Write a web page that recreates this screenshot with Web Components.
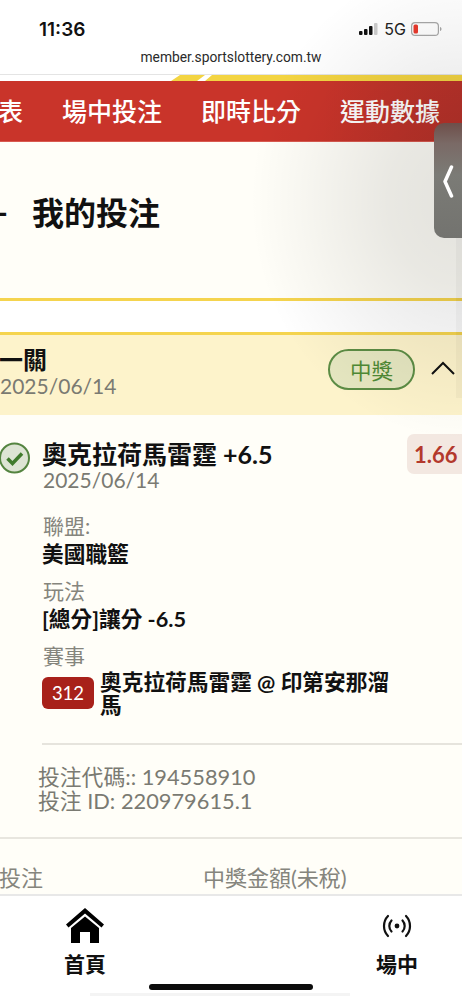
<!DOCTYPE html>
<html lang="zh-Hant">
<head>
<meta charset="utf-8">
<title>我的投注</title>
<style>
  html, body { margin: 0; padding: 0; }
  body {
    width: 462px;
    height: 1000px;
    overflow: hidden;
    position: relative;
    display: flex;
    flex-direction: column;
    background: #fffef8;
    font-family: Lato, "Noto Sans CJK TC", sans-serif;
  }
</style>
</head>
<body>
  <status-bar time="11:36" url="member.sportslottery.com.tw"></status-bar>
  <main-nav>
    <span>表</span><span>場中投注</span><span>即時比分</span><span>運動數據</span>
  </main-nav>
  <page-title>我的投注</page-title>
  <bet-card name="一關" date="2025/06/14" status="中獎">
    <bet-leg name="奧克拉荷馬雷霆 +6.5" date="2025/06/14" odds="1.66" league="美國職籃" play="[總分]讓分 -6.5" code="312" game="奧克拉荷馬雷霆 @ 印第安那溜馬"></bet-leg>
    <bet-ids>
      <div>投注代碼:: 194558910</div>
      <div>投注 ID: 220979615.1</div>
    </bet-ids>
    <bet-sums></bet-sums>
  </bet-card>
  <tab-bar></tab-bar>
  <side-tab></side-tab>

<script>
const cjk = 'Lato, "Noto Sans CJK TC", sans-serif';

class StatusBar extends HTMLElement {
  connectedCallback() {
    this.attachShadow({ mode: 'open' });
    this.shadowRoot.innerHTML = `
      <style>
        :host { display: block; height: 75px; box-sizing: border-box; background: #fff; border-bottom: 1px solid #e4e4e4; flex: none; }
        .top { display: flex; align-items: center; justify-content: space-between; height: 24px; padding: 17px 20px 0 39px; }
        .time { font: 600 19px Inter, "Liberation Sans", sans-serif; color: #111; }
        .right { display: flex; align-items: center; gap: 5px; font: 400 16px Inter, "Liberation Sans", sans-serif; color: #222; }
        .url { margin-top: 8px; text-align: center; font: 400 13.8px Roboto, "Liberation Sans", sans-serif; color: #2a2a2a; }
      </style>
      <div class="top">
        <span class="time">${this.getAttribute('time')}</span>
        <span class="right">
          <svg width="20" height="14" viewBox="0 0 20 14"><rect x="0" y="9" width="3.5" height="4" rx="1" fill="#111"/><rect x="5" y="7" width="3.5" height="6" rx="1" fill="#111"/><rect x="10" y="4" width="3.5" height="9" rx="1" fill="#111"/><rect x="15" y="1" width="3.5" height="12" rx="1" fill="#ccc"/></svg>
          <span>5G</span>
          <svg width="31" height="14" viewBox="0 0 31 14"><rect x=".6" y=".6" width="26.8" height="12.8" rx="3.5" fill="none" stroke="#a8a8a8" stroke-width="1.2"/><rect x="2.5" y="2.5" width="4.5" height="9" rx="1.5" fill="#e8392c"/><path d="M29 5v4c1-.3 1.5-1 1.5-2s-.5-1.7-1.5-2z" fill="#a8a8a8"/></svg>
        </span>
      </div>
      <div class="url">${this.getAttribute('url')}</div>`;
  }
}

class MainNav extends HTMLElement {
  connectedCallback() {
    this.attachShadow({ mode: 'open' });
    this.shadowRoot.innerHTML = `
      <style>
        :host { display: block; flex: none; overflow: hidden; }
        svg { display: block; }
        .bar { height: 61px; box-sizing: border-box; display: flex; align-items: center; gap: 39px; margin-left: -2px; padding-bottom: 2px; white-space: nowrap;
          background: linear-gradient(90deg, #c9342a 0, #c9342a 70%, #b8322a 100%); border-bottom: 1px solid #d95a50;
          font: 500 25px ${cjk}; color: #fff; }
      </style>
      <svg width="462" height="6" viewBox="0 0 462 6"><rect width="462" height="6" fill="#fff"/><path d="M171 6 180 0H205L197 6ZM205 6 212 0H462V6Z" fill="#f3d442"/></svg>
      <div class="bar"><slot></slot></div>`;
  }
}

class PageTitle extends HTMLElement {
  connectedCallback() {
    this.attachShadow({ mode: 'open' });
    this.shadowRoot.innerHTML = `
      <style>
        :host { display: block; flex: none; height: 159px; box-sizing: border-box; border-bottom: 3px solid #f5d44e; overflow: hidden; }
        .row { display: flex; align-items: center; height: 40px; padding-top: 49px; margin-left: -4px; font: 700 32px ${cjk}; color: #111; }
        .dash { width: 36px; }
      </style>
      <div class="row"><span class="dash">-</span><span><slot></slot></span></div>`;
  }
}

class BetCard extends HTMLElement {
  connectedCallback() {
    this.attachShadow({ mode: 'open' });
    this.shadowRoot.innerHTML = `
      <style>
        :host { display: block; flex: 1; min-height: 0; overflow: hidden; background: #fffef8; }
        .spacer { height: 34px; box-sizing: border-box; background: #fff; border-bottom: 3px solid #f5d44e; }
        header { height: 80px; box-sizing: border-box; background: #fdf3cb; display: flex; align-items: center; justify-content: space-between; padding: 0 7px 0 0; }
        .who { margin-top: -6px; }
        .name { font: 700 24px/28px ${cjk}; color: #111; margin-left: -1px; }
        .date { font: 400 21px/24px Lato, sans-serif; color: #7a7a72; }
        .side { display: flex; align-items: center; gap: 16px; margin-top: -12px; }
        .pill { width: 87px; height: 41px; box-sizing: border-box; border: 2px solid #5c8c44; border-radius: 21px; background: #e5e6c0;
          display: flex; align-items: center; justify-content: center; font: 400 21.5px ${cjk}; color: #4f8a35; }
        svg { display: block; margin-top: -3px; }
      </style>
      <div class="spacer"></div>
      <header>
        <div class="who">
          <div class="name">${this.getAttribute('name')}</div>
          <div class="date">${this.getAttribute('date')}</div>
        </div>
        <div class="side">
          <span class="pill">${this.getAttribute('status')}</span>
          <svg width="24" height="14" viewBox="0 0 24 14"><path d="M1 13 12 2 23 13" fill="none" stroke="#111" stroke-width="2"/></svg>
        </div>
      </header>
      <slot></slot>`;
  }
}

class BetLeg extends HTMLElement {
  connectedCallback() {
    const a = n => this.getAttribute(n);
    this.attachShadow({ mode: 'open' });
    this.shadowRoot.innerHTML = `
      <style>
        :host { display: block; position: relative; padding: 24px 0 0 43px; height: 328px; box-sizing: border-box; }
        .check { position: absolute; left: -1px; top: 27px; }
        .odds { position: absolute; right: 0; top: 19px; width: 55px; height: 40px; box-sizing: border-box; padding-left: 7px; border-radius: 7px 0 0 7px; background: #f3e8e1;
          display: flex; align-items: center; font: 700 22px Lato, sans-serif; color: #b3392c; }
        .name { font: 700 25px/30px ${cjk}; color: #111; margin-left: -1px; }
        .date { font: 400 21px/22px Lato, sans-serif; color: #7a7a72; margin-bottom: 23px; }
        .label { font: 400 21px/27px ${cjk}; color: #85857d; margin: -2px 0 2px; }
        .val { font: 700 21.7px/27px ${cjk}; color: #111; margin: 0 0 11px -1px; }
        .game { display: flex; gap: 6px; margin: 0 0 0 -1px; }
        .code { flex: none; width: 52px; height: 32px; margin-top: 6px; border-radius: 6px; background: #a8211a; color: #fff; display: flex; align-items: center; justify-content: center; font: 400 18.5px Lato, sans-serif; }
        .title { width: 292px; font: 700 21.7px/23px ${cjk}; color: #111; }
      </style>
      <svg class="check" width="31" height="32" viewBox="0 0 31 32"><circle cx="15.5" cy="16" r="14.5" fill="#dde4d4" stroke="#548440" stroke-width="2"/><path d="M8.5 16.5 13.5 21.5 23 11.5" fill="none" stroke="#3f7a2c" stroke-width="3.5"/></svg>
      <div class="odds">${a('odds')}</div>
      <div class="name">${a('name')}</div>
      <div class="date">${a('date')}</div>
      <div class="label">聯盟:</div>
      <div class="val">${a('league')}</div>
      <div class="label">玩法</div>
      <div class="val">${a('play')}</div>
      <div class="label">賽事</div>
      <div class="game"><span class="code">${a('code')}</span><span class="title">${a('game')}</span></div>`;
  }
}

class BetIds extends HTMLElement {
  connectedCallback() {
    this.attachShadow({ mode: 'open' });
    this.shadowRoot.innerHTML = `
      <style>
        :host { display: block; height: 96px; box-sizing: border-box; margin-left: 42px; border-top: 2px solid #e6e4dd; position: relative; }
        .in { margin-left: -4px; padding-top: 20px; font: 400 21.8px/24px ${cjk}; color: #7a7a72; }
        .rule { position: absolute; left: -42px; right: 0; bottom: 0; height: 2px; background: #e8e6df; }
      </style>
      <div class="in"><slot></slot></div>
      <div class="rule"></div>`;
  }
}

class BetSums extends HTMLElement {
  connectedCallback() {
    this.attachShadow({ mode: 'open' });
    this.shadowRoot.innerHTML = `
      <style>
        :host { display: flex; padding-top: 24px; margin-left: -1px; font: 400 22px/30px ${cjk}; color: #85857d; }
        .a { width: 204px; }
      </style>
      <span class="a">投注</span><span>中獎金額(未稅)</span>`;
  }
}

class TabBar extends HTMLElement {
  connectedCallback() {
    this.attachShadow({ mode: 'open' });
    this.shadowRoot.innerHTML = `
      <style>
        :host { display: block; flex: none; height: 106px; box-sizing: border-box; background: #fff; border-top: 2px solid #e8e8e8; position: relative; }
        .tabs { display: flex; justify-content: space-between; padding: 0 43px 0 63px; }
        .tab { width: 44px; display: flex; flex-direction: column; align-items: center; font: 700 21px/26px ${cjk}; color: #111; }
        .ico { height: 47px; display: flex; align-items: flex-end; justify-content: center; margin-bottom: 8px; }
        .home { position: absolute; left: 149px; top: 88px; width: 164px; height: 6px; border-radius: 3px; background: #0c0c0c; }
        .edge { position: absolute; left: 90px; top: 97px; width: 260px; height: 3px; background: #f4f4f4; }
      </style>
      <div class="tabs">
        <div class="tab">
          <div class="ico"><svg width="38" height="35" viewBox="0 0 38 35"><path d="M19 0 38 16.5 35.5 19.5 19 5.5 2.5 19.5 0 16.5Z" fill="#000"/><path d="M19 8.5 33 20V35H24V24H14V35H5V20Z" fill="#000"/></svg></div>
          <span>首頁</span>
        </div>
        <div class="tab">
          <div class="ico"><svg width="30" height="24" viewBox="0 0 30 24" style="margin-bottom:5px"><circle cx="15" cy="12" r="2.4" fill="#111"/><path d="M9.5 6.5a8 8 0 0 0 0 11M20.5 6.5a8 8 0 0 1 0 11M6 2a14.5 14.5 0 0 0 0 20M24 2a14.5 14.5 0 0 1 0 20" fill="none" stroke="#111" stroke-width="2.2" stroke-linecap="round"/></svg></div>
          <span>場中</span>
        </div>
      </div>
      <div class="edge"></div>
      <div class="home"></div>`;
  }
}

// the drawer handle sits over everything on the right edge, with its soft shadow
class SideTab extends HTMLElement {
  connectedCallback() {
    this.attachShadow({ mode: 'open' });
    this.shadowRoot.innerHTML = `
      <style>
        :host { position: absolute; inset: 0; display: block; pointer-events: none; }
        .shade { position: absolute; left: 250px; right: 0; top: 0; height: 440px;
          background: radial-gradient(ellipse 212px 240px at 100% 200px, rgba(0,0,0,.11), rgba(0,0,0,.085) 35%, rgba(0,0,0,.03) 75%, transparent 100%); }
        .strip { position: absolute; right: 0; top: 238px; width: 6px; height: 160px; background: rgba(0,0,0,.03); }
        .tab { position: absolute; right: 0; top: 123px; width: 28px; height: 115px; border-radius: 10px 0 0 10px;
          background: linear-gradient(180deg, #6e4f4a 0, #7a6a66 18%, #7b7b76 45%, #73736f 100%); }
        svg { position: absolute; left: 8px; top: 42px; }
      </style>
      <div class="shade"></div>
      <div class="strip"></div>
      <div class="tab"><svg width="12" height="33" viewBox="0 0 12 33"><path d="M9.5 2 3 16.5 9.5 31" fill="none" stroke="#fff" stroke-width="3.5" stroke-linecap="round" stroke-linejoin="round"/></svg></div>`;
  }
}

customElements.define('status-bar', StatusBar);
customElements.define('main-nav', MainNav);
customElements.define('page-title', PageTitle);
customElements.define('bet-card', BetCard);
customElements.define('bet-leg', BetLeg);
customElements.define('bet-ids', BetIds);
customElements.define('bet-sums', BetSums);
customElements.define('tab-bar', TabBar);
customElements.define('side-tab', SideTab);
</script>
</body>
</html>
